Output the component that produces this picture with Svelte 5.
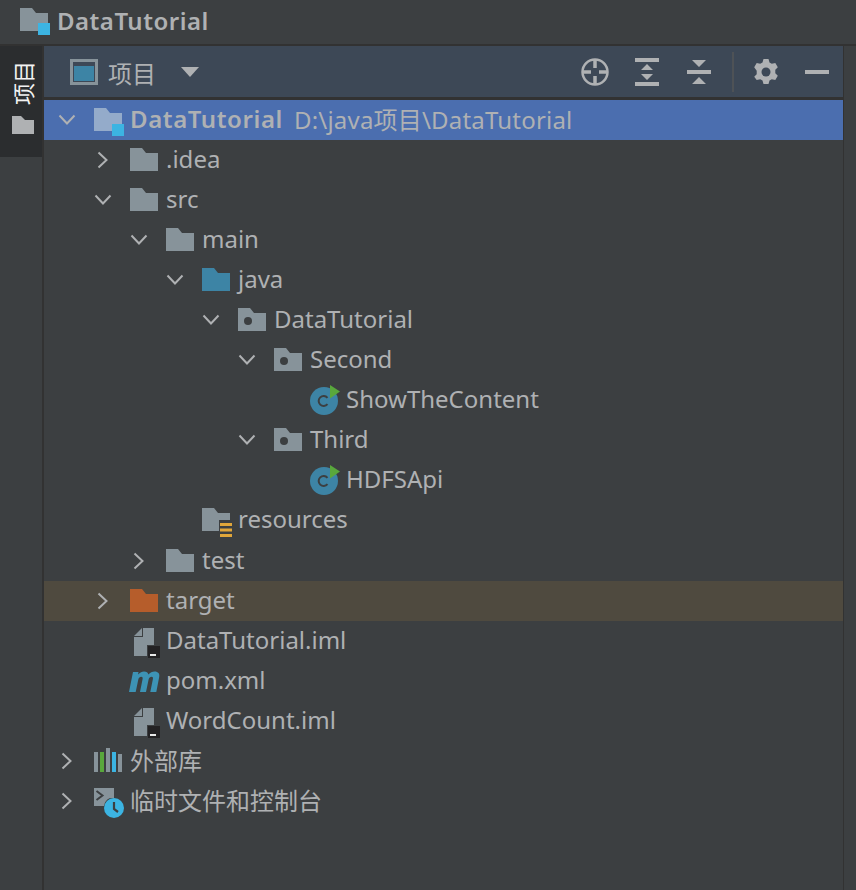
<script>
  const tree = [
    { level: 0, arrow: "down", icon: "module", name: "DataTutorial", path: "D:\\java项目\\DataTutorial", selected: true },
    { level: 1, arrow: "right", icon: "folder", name: ".idea" },
    { level: 1, arrow: "down", icon: "folder", name: "src" },
    { level: 2, arrow: "down", icon: "folder", name: "main" },
    { level: 3, arrow: "down", icon: "source", name: "java" },
    { level: 4, arrow: "down", icon: "package", name: "DataTutorial" },
    { level: 5, arrow: "down", icon: "package", name: "Second" },
    { level: 6, icon: "class", name: "ShowTheContent" },
    { level: 5, arrow: "down", icon: "package", name: "Third" },
    { level: 6, icon: "class", name: "HDFSApi" },
    { level: 3, icon: "resources", name: "resources" },
    { level: 2, arrow: "right", icon: "folder", name: "test" },
    { level: 1, arrow: "right", icon: "excluded", name: "target", excluded: true },
    { level: 1, icon: "iml", name: "DataTutorial.iml" },
    { level: 1, icon: "maven", name: "pom.xml" },
    { level: 1, icon: "iml", name: "WordCount.iml" },
    { level: 0, arrow: "right", icon: "library", name: "外部库" },
    { level: 0, arrow: "right", icon: "scratch", name: "临时文件和控制台" },
  ];
</script>

{#snippet folder(fill)}
  <path d="M0 0h12l4 5h12v18H0z" fill={fill} />
{/snippet}

{#snippet icon(kind)}
  <svg class="icon" width="32" height="32" viewBox="0 0 32 32">
    {#if kind === "folder"}
      <g transform="translate(0 4)">{@render folder("#87939a")}</g>
    {:else if kind === "excluded"}
      <g transform="translate(0 4)">{@render folder("#b65d2b")}</g>
    {:else if kind === "source"}
      <g transform="translate(0 4)">{@render folder("#3d84a5")}</g>
    {:else if kind === "package"}
      <g transform="translate(0 4)">
        {@render folder("#87939a")}
        <circle cx="10" cy="13" r="4" fill="#3c3f41" />
      </g>
    {:else if kind === "module"}
      <g transform="translate(0 4)">
        {@render folder("#94abca")}
        <rect x="18" y="16" width="12" height="12" fill="#3cb4e2" />
      </g>
    {:else if kind === "resources"}
      <g transform="translate(0 4)">
        <path d="M0 0h12l4 5h12v7H17v11H0z" fill="#87939a" />
        <path d="M18 15h12v3H18zM18 20.500h12v3H18zM18 26h12v3H18z" fill="#e0a63a" />
      </g>
    {:else if kind === "class"}
      <circle cx="14" cy="17" r="14" fill="#3d84a5" />
      <path d="M17.500 13.800A5 5 0 1 0 17.500 20.200" fill="none" stroke="#3c3f41" stroke-width="2" />
      <path d="M20 1l10 6.500-10 7z" fill="#59a83c" />
    {:else if kind === "iml"}
      <path d="M4 11l8-8v8zM13 3h11v17h-7v11H4V12h9z" fill="#87939a" />
      <rect x="18" y="21" width="12" height="12" fill="#232224" />
      <rect x="20" y="29" width="6" height="2" fill="#e8e8e8" />
    {:else if kind === "maven"}
      <path d="M-1 27L3 7h5.500l-.5 2.500C10 7.500 12 6.500 14 6.500c2.600 0 4 1.200 4.400 3.100 1.700-2 3.900-3.100 6.200-3.100 3.600 0 5.300 2.200 4.600 5.600L26.300 27h-6l2.600-13c.3-1.500-.2-2.300-1.400-2.300-1.300 0-2.500 1-2.900 2.800L16 27h-6l2.600-13c.3-1.500-.2-2.300-1.400-2.300-1.300 0-2.500 1-2.900 2.800L5.700 27z" fill="#3d93b5" />
    {:else if kind === "library"}
      <rect x="0" y="7" width="4" height="20" fill="#87939a" />
      <rect x="6" y="7" width="4" height="20" fill="#59a83c" />
      <rect x="12" y="3" width="4" height="24" fill="#87939a" />
      <rect x="18" y="7" width="4" height="20" fill="#3cb4e2" />
      <rect x="24" y="9" width="4" height="18" fill="#87939a" />
    {:else if kind === "scratch"}
      <path d="M0 3h20v10h-4a10 10 0 0 0-6 8H0z" fill="#87939a" />
      <path d="M2.500 6l6 4.500-6 4.500" fill="none" stroke="#3c3f41" stroke-width="2" />
      <circle cx="20" cy="23" r="10" fill="#3cb4e2" />
      <path d="M20 17v7l4 3" fill="none" stroke="#3c3f41" stroke-width="2.200" />
    {/if}
  </svg>
{/snippet}

<div class="window">
  <div class="titlebar">
    <svg width="32" height="28" viewBox="0 0 32 28">
      {@render folder("#87939a")}
      <rect x="18" y="15" width="12" height="12" fill="#3cb4e2" />
    </svg>
    <span class="title">DataTutorial</span>
  </div>

  <div class="body">
    <div class="stripe">
      <div class="stripe-tab">
        <span class="stripe-label">项目</span>
        <svg width="22" height="18" viewBox="0 0 22 18"><path d="M0 0h9l4 4h9v14H0z" fill="#afb1b3" /></svg>
      </div>
    </div>

    <div class="panel">
      <div class="panel-head">
        <div class="view-select">
          <svg width="28" height="26" viewBox="0 0 28 26">
            <rect x="1.500" y="1.500" width="25" height="23" fill="none" stroke="#87939a" stroke-width="3" />
            <rect x="4" y="7" width="20" height="15" fill="#3d84a5" />
          </svg>
          <span class="view-name">项目</span>
          <svg class="caret" width="18" height="10" viewBox="0 0 18 10"><path d="M0 0h18L9 10z" fill="#afb1b3" /></svg>
        </div>
        <div class="tools">
          <svg width="28" height="28" viewBox="0 0 28 28" fill="none" stroke="#afb1b3">
            <circle cx="14" cy="14" r="12.500" stroke-width="2.500" />
            <path d="M14 2v8M14 18v8M2 14h8M18 14h8" stroke-width="3.500" />
          </svg>
          <svg width="24" height="28" viewBox="0 0 24 28" fill="#afb1b3">
            <path d="M0 0h24v4H0zM0 24h24v4H0zM12 6l6 6H6zM12 22l-6-6h12z" />
          </svg>
          <svg class="collapse" width="24" height="28" viewBox="0 0 24 28" fill="#afb1b3">
            <path d="M0 12h24v4H0zM5 2h14l-7 7zM12 19l7 7H5z" />
          </svg>
          <i class="tool-sep"></i>
          <svg width="26" height="28" viewBox="0 0 26 28">
            <path d="M10.500 1h5l1 3.500 2.300 1.300 3.500-.9 2.500 4.300-2.500 2.600v3.400l2.500 2.600-2.500 4.300-3.500-.9-2.300 1.300-1 3.500h-5l-1-3.500-2.300-1.300-3.500.9L1.200 18.800l2.500-2.600v-3.400L1.200 9.200l2.500-4.300 3.500.9 2.300-1.300z" fill="#afb1b3" />
            <circle cx="13" cy="14" r="4.500" fill="#3d4856" />
          </svg>
          <svg width="24" height="28" viewBox="0 0 24 28" fill="#afb1b3"><path d="M0 12h24v4H0z" /></svg>
        </div>
      </div>

      <div class="tree">
        {#each tree as row}
          <div class="row" class:selected={row.selected} class:excluded={row.excluded} style="padding-left: {row.level * 36}px">
            <span class="arrow">
              {#if row.arrow === "down"}
                <svg width="18" height="12" viewBox="0 0 18 12"><path d="M1.500 1.500L9 9.500l7.500-8" fill="none" stroke="#afb1b3" stroke-width="2" /></svg>
              {:else if row.arrow === "right"}
                <svg width="12" height="18" viewBox="0 0 12 18"><path d="M1.500 1.500l8 7.500-8 7.500" fill="none" stroke="#afb1b3" stroke-width="2" /></svg>
              {/if}
            </span>
            {@render icon(row.icon)}
            <span class="name" class:bold={row.selected}>{row.name}</span>
            {#if row.path}<span class="path">{row.path}</span>{/if}
          </div>
        {/each}
      </div>
    </div>

    <div class="edge"></div>
  </div>
</div>

<style>
  :global(body) {
    background: #3c3f41;
  }

  .window {
    width: 856px;
    height: 890px;
    display: flex;
    flex-direction: column;
    background: #3c3f41;
    color: #afb1b3;
    font-family: "Noto Sans", "Noto Sans CJK SC", sans-serif;
    font-size: 24px;
    overflow: hidden;
  }

  .titlebar {
    height: 44px;
    flex: none;
    box-sizing: border-box;
    display: flex;
    align-items: center;
    gap: 5px;
    padding: 0 0 0 20px;
  }

  .title {
    font-weight: 600;
    font-size: 24px;
    letter-spacing: 0.5px;
    padding-bottom: 3px;
  }

  .body {
    flex: 1;
    display: flex;
    min-height: 0;
    border-top: 2px solid #323232;
  }

  .stripe {
    width: 42px;
    flex: none;
    border-right: 2px solid #323232;
  }

  .stripe-tab {
    height: 111px;
    background: #2b2d2f;
    display: flex;
    flex-direction: column;
    align-items: center;
    gap: 11px;
    padding: 15px 0 0 4px;
    box-sizing: border-box;
  }

  .stripe-label {
    color: #f2f2f2;
    font-size: 22px;
    line-height: 22px;
    writing-mode: vertical-rl;
    text-orientation: sideways;
    transform: rotate(180deg);
  }

  .panel {
    flex: 1;
    min-width: 0;
  }

  .panel-head {
    height: 51px;
    background: #3d4856;
    border-bottom: 3px solid #323232;
    display: flex;
    align-items: center;
    justify-content: space-between;
    padding: 0 14px 0 26px;
  }

  .view-select {
    display: flex;
    align-items: center;
    gap: 10px;
    font-size: 24px;
  }

  .view-name {
    padding-top: 2px;
  }

  .caret {
    margin-left: 15px;
  }

  .tools {
    display: flex;
    align-items: center;
    gap: 26px;
  }

  .collapse {
    margin-left: 2px;
  }

  .tool-sep {
    width: 2px;
    height: 40px;
    background: #4e5256;
    margin: 0 -7px 0 -5px;
  }

  .row {
    height: 40.05px;
    display: flex;
    align-items: center;
    white-space: nowrap;
    box-sizing: border-box;
  }

  .row.selected {
    background: #4b6eaf;
  }

  .row.excluded {
    background: #4f4a3f;
  }

  .arrow {
    width: 46px;
    margin-right: 4px;
    flex: none;
    display: flex;
    justify-content: center;
  }

  .icon {
    flex: none;
    margin-right: 4px;
    overflow: visible;
  }

  .name,
  .path {
    padding-bottom: 3px;
  }

  .bold {
    font-weight: 600;
    letter-spacing: 0.6px;
  }

  .path {
    margin-left: 11px;
    letter-spacing: 0.2px;
  }

  .edge {
    width: 13px;
    flex: none;
    box-sizing: border-box;
    border-left: 1px solid #323232;
  }
</style>
